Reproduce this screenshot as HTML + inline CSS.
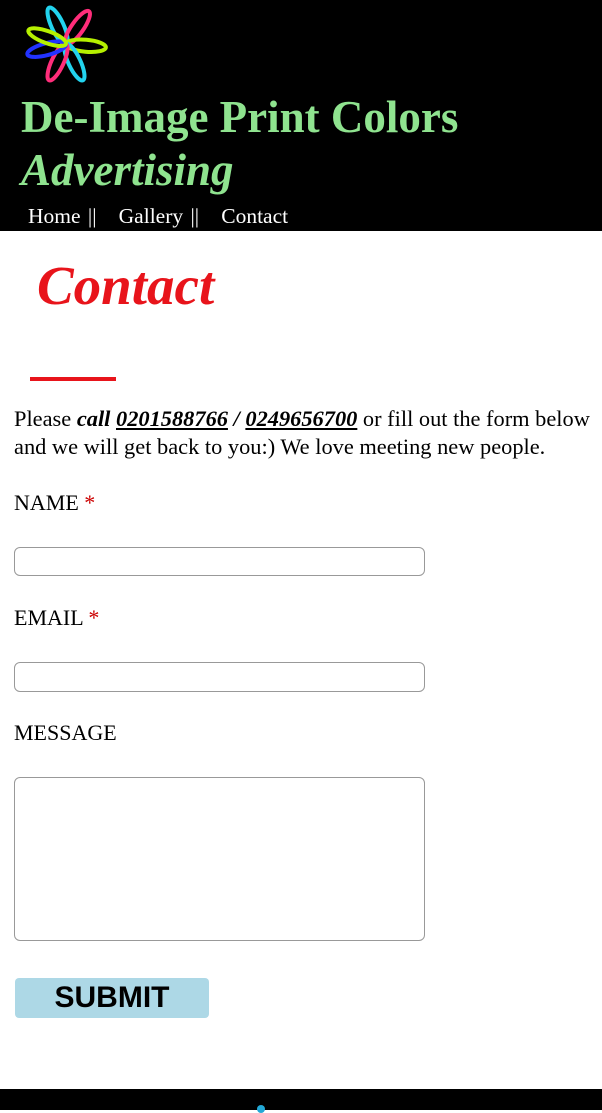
<!DOCTYPE html>
<html><head><style>
body{margin:0;width:602px;height:1110px;overflow:hidden;background:#fff;font-family:'Liberation Serif','Times New Roman',Times,Tinos,serif;position:relative}
.a{position:absolute;white-space:nowrap}
.hdr{position:absolute;left:0;top:0;width:602px;height:231px;background:#000}
.g{color:#8fe38f;font-weight:bold;font-size:45px}
.lbl{font-size:22px;color:#000}
.inp{position:absolute;left:14px;width:409px;border:1px solid #999;border-radius:6px;background:#fff}
</style></head><body>
<div class="hdr"></div>
<svg class="a" style="left:18px;top:2px" width="96" height="84" viewBox="0 0 96 84">
<g transform="translate(48,42)" fill="none" stroke-width="4">
<ellipse cx="0" cy="-20" rx="6" ry="20" stroke="#22d3ee" transform="rotate(-25)"/>
<ellipse cx="0" cy="-20" rx="6" ry="20" stroke="#ff2d7a" transform="rotate(35)"/>
<ellipse cx="0" cy="-20" rx="6" ry="20" stroke="#b6f000" transform="rotate(95)"/>
<ellipse cx="0" cy="-20" rx="6" ry="20" stroke="#22d3ee" transform="rotate(155)"/>
<ellipse cx="0" cy="-20" rx="6" ry="20" stroke="#ff2d7a" transform="rotate(205)"/>
<ellipse cx="0" cy="-20" rx="6" ry="20" stroke="#2233ff" transform="rotate(255)"/>
<ellipse cx="0" cy="-20" rx="6" ry="20" stroke="#b6f000" transform="rotate(290)"/>
</g></svg>
<div class="a g" style="left:21px;top:91px">De-Image Print Colors</div>
<div class="a g" style="left:21px;top:144px;font-style:italic">Advertising</div>
<div class="a" style="left:28px;top:204px;color:#fff;font-size:21.5px;word-spacing:2px">Home ||&nbsp;&nbsp; Gallery ||&nbsp;&nbsp; Contact</div>
<div class="a" style="left:37px;top:254px;color:#e8141b;font-size:55px;font-weight:bold;font-style:italic">Contact</div>
<div class="a" style="left:30px;top:377px;width:86px;height:4px;background:#e8141b"></div>
<div class="a lbl" style="left:14px;top:405px;line-height:28px;font-size:22.4px">Please <b><i>call <u>0201588766</u> / <u>0249656700</u></i></b> or fill out the form below<br>and we will get back to you:) We love meeting new people.</div>
<div class="a lbl" style="left:14px;top:490px">NAME <span style="color:#c00">*</span></div>
<div class="inp" style="top:547px;height:27px"></div>
<div class="a lbl" style="left:14px;top:605px">EMAIL <span style="color:#c00">*</span></div>
<div class="inp" style="top:662px;height:28px"></div>
<div class="a lbl" style="left:14px;top:720px">MESSAGE</div>
<div class="inp" style="top:777px;height:162px"></div>
<div class="a" style="left:15px;top:978px;width:194px;height:40px;background:#add8e6;border-radius:4px;font-family:'Liberation Sans',Arial,sans-serif;font-weight:bold;font-size:30px;text-align:center;line-height:40px">SUBMIT</div>
<div class="a" style="left:0;top:1089px;width:602px;height:21px;background:#000"></div>
<div class="a" style="left:257px;top:1105px;width:8px;height:8px;border-radius:50%;background:#22a8d6"></div>
</body></html>
